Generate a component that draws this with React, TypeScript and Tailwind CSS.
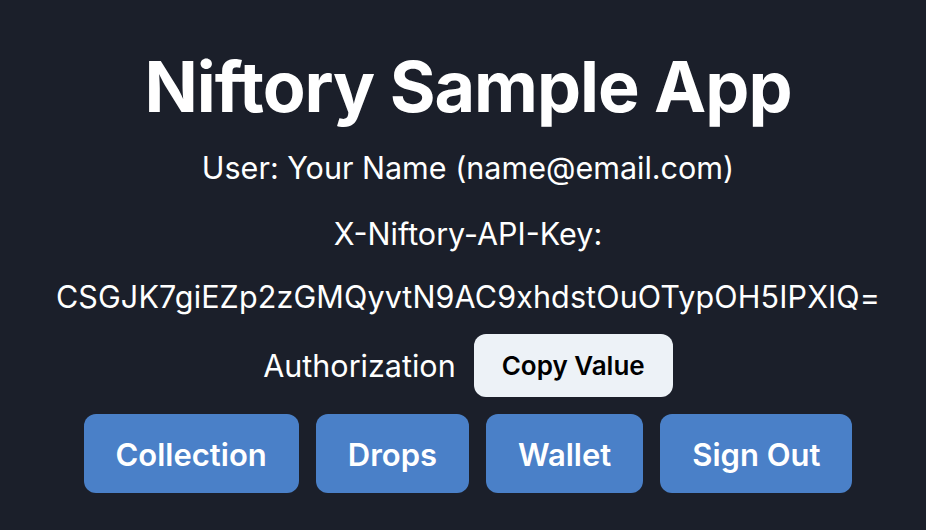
const buttons = ["Collection", "Drops", "Wallet", "Sign Out"];

export default function App() {
  return (
    <div className="min-h-[530px] w-full bg-[#1b1f2a] font-['Inter',sans-serif] text-white">
      <div className="flex flex-col items-center pt-[45px] pl-[10px]">
        <h1 className="text-[70px] leading-[84px] font-bold tracking-[-0.015em]">
          Niftory Sample App
        </h1>
        <p className="mt-[16px] text-[30.5px] leading-[45px]">
          User: Your Name (name@email.com)
        </p>
        <p className="mt-[21px] text-[30.5px] leading-[45px]">
          X-Niftory-API-Key:
        </p>
        <p className="mt-[18px] text-[30.5px] leading-[45px] tracking-[0.004em]">
          CSGJK7giEZp2zGMQyvtN9AC9xhdstOuOTypOH5IPXIQ=
        </p>
        <div className="mt-[15px] flex items-center gap-[18px]">
          <span className="text-[30.5px] leading-[45px]">Authorization</span>
          <button className="h-[63px] px-[28px] rounded-[12px] bg-[#edf2f7] text-[26px] font-semibold text-black">
            Copy Value
          </button>
        </div>
        <div className="mt-[17px] flex gap-[17px]">
          {buttons.map((b) => (
            <button
              key={b}
              className="h-[79px] px-[32px] pt-[3px] rounded-[12px] bg-[#4a80c8] text-[31px] font-semibold text-white"
            >
              {b}
            </button>
          ))}
        </div>
      </div>
    </div>
  );
}
